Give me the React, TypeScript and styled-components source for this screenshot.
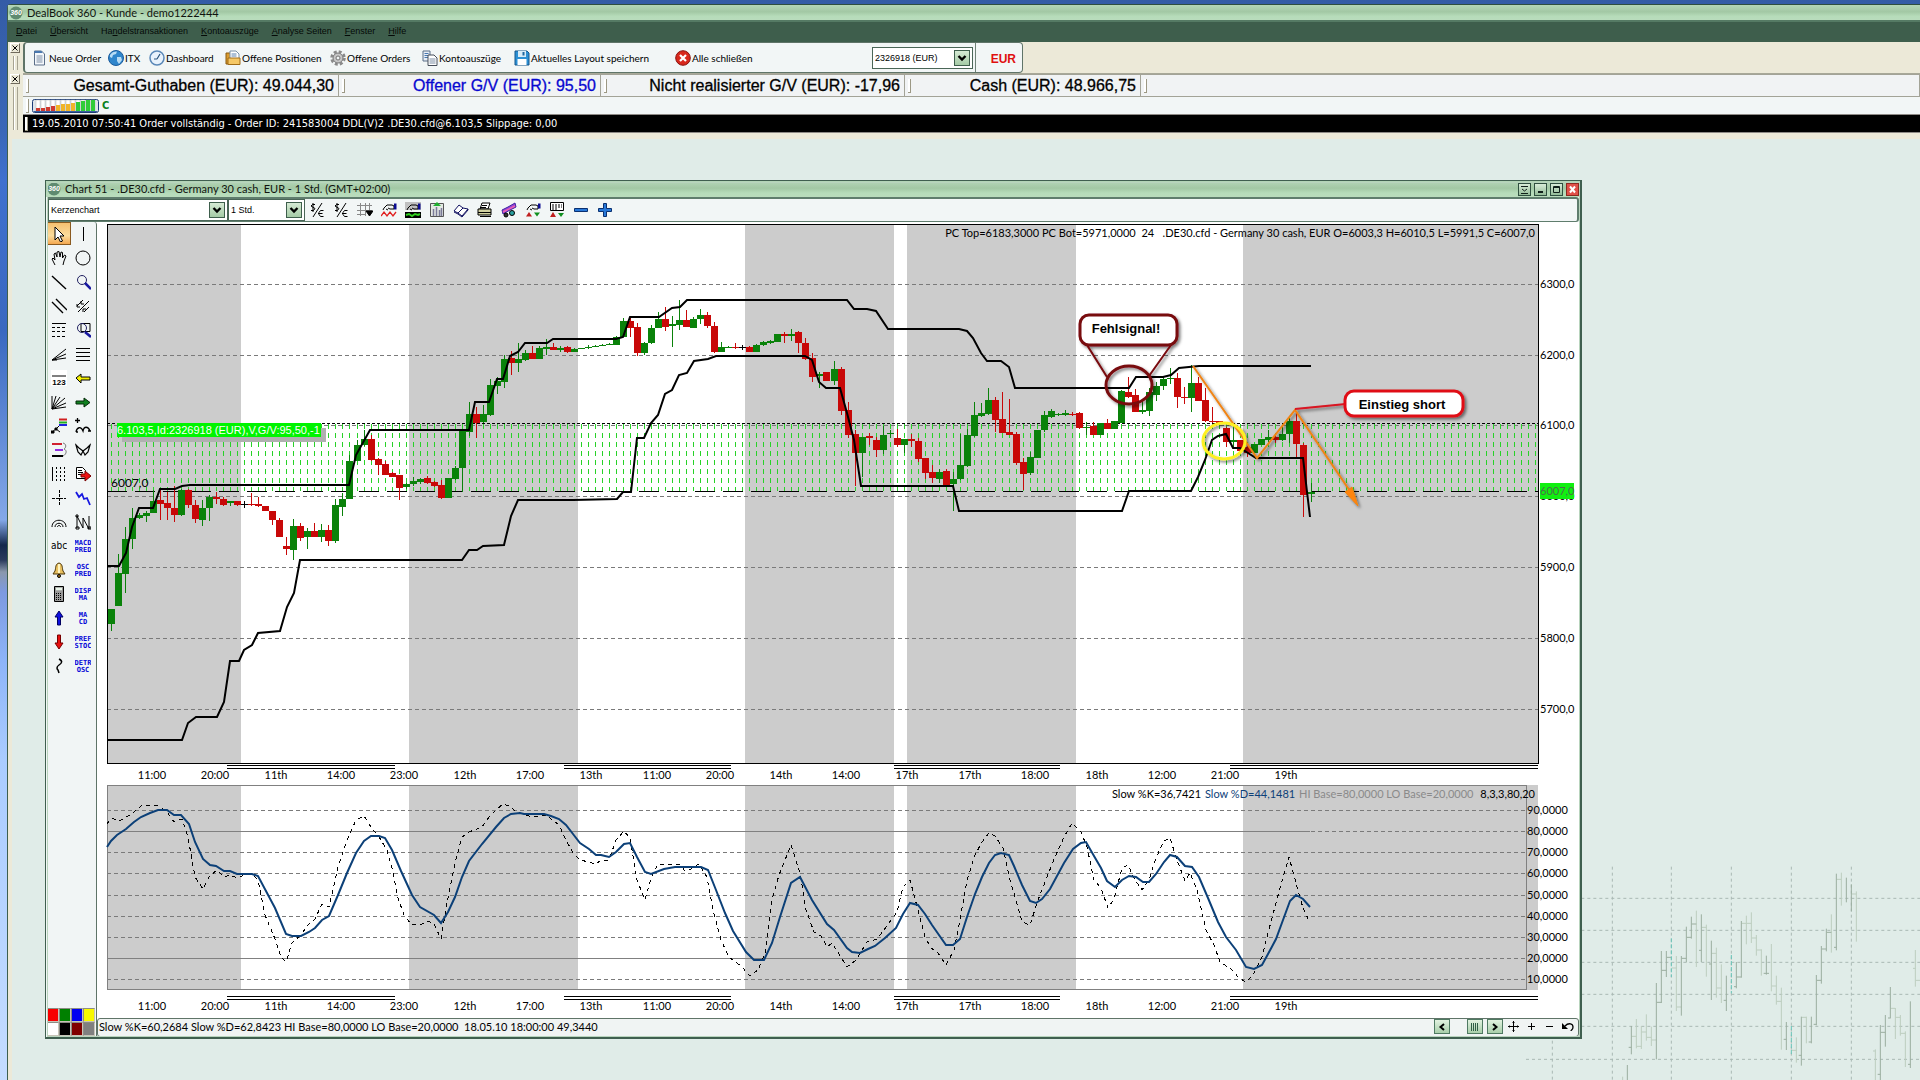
import React from "react";
import styled, { createGlobalStyle } from "styled-components";

const GlobalStyle = createGlobalStyle`
  * { box-sizing: border-box; }
  html, body { margin: 0; padding: 0; }
  body { font-family: "Liberation Sans", Arial, sans-serif; font-size: 10px; color: #000; overflow: hidden; }
  button, select { font: inherit; color: inherit; margin: 0; }
`;

const uiFont = `"DejaVu Sans Condensed", "DejaVu Sans", Tahoma, sans-serif`;
const chartFont = `Lato, "Century Gothic", sans-serif`;

/* ---------- frame ---------- */

const Desktop = styled.div`
  min-height: 100vh;
  display: flex;
  padding: 4px 0 0 7px;
  background: linear-gradient(180deg, #345ca6 0, #3a67b8 130px, #3f70cf 180px, #3a68c0 330px, #5580d0 400px, #84a8e8 520px, #14284c 545px, #2b3a5c 560px, #8a98ac 572px, #7d9ae0 592px, #8db4f8 660px, #aaccff 760px, #c4dcff 1080px);
`;

const AppWindow = styled.div`
  flex: 1;
  min-width: 0;
  display: flex;
  flex-direction: column;
  border-top: 1px solid #2f4f3f;
  border-left: 1px solid #3d5f4e;
  border-radius: 4px 0 0 0;
  background: #ece9d8;
`;

const TitleBar = styled.header<{ $h: number }>`
  height: ${(p) => p.$h}px;
  flex: none;
  display: flex;
  align-items: center;
  gap: 4px;
  padding-left: 1px;
  background: linear-gradient(180deg, #b4d6b8 0, #a2c8a4 45%, #b6dcba 75%, #b9dcbc 100%);
  color: #10140f;
`;

const Title = styled.h1`
  margin: 0;
  flex: 1;
  font: 400 11px/14px ${chartFont};
`;

const MenuBar = styled.nav`
  height: 22px;
  flex: none;
  display: flex;
  align-items: center;
  gap: 13px;
  padding: 0 0 2px 8px;
  border-top: 2px solid #557a64;
  background: #3e5e4c;
`;

const MenuItem = styled.button`
  border: 0;
  padding: 0;
  background: none;
  color: #050a07;
  font: 9px/12px "Liberation Sans", Arial, sans-serif;
  u { text-underline-offset: 1px; }
`;

/* ---------- docked bars ---------- */

const Dock = styled.div`
  display: flex;
  align-items: stretch;
`;

const Gutter = styled.div<{ $pad: number }>`
  width: 15px;
  flex: none;
  display: flex;
  flex-direction: column;
  align-items: center;
  gap: 3px;
  padding: ${(p) => p.$pad}px 2px 3px 1px;
`;

const CloseDock = styled.button`
  width: 10px;
  height: 10px;
  padding: 0;
  border: 1px solid;
  border-color: #fff #706a5c #706a5c #fff;
  background: #ece9d8;
  display: flex;
  align-items: center;
  justify-content: center;
`;

const GutterGrip = styled.div`
  flex: 1;
  width: 5px;
  border: solid #a7a392;
  border-width: 0 1px;
  box-shadow: inset 1px 0 #fff;
`;

const ToolBar = styled.div`
  height: 31px;
  display: flex;
  align-items: center;
  padding-left: 7px;
  border: 1px solid #5f7468;
  border-width: 1px 1px 1px 2px;
  border-radius: 4px;
  background: #f2f6f6;
`;

const ToolButton = styled.button<{ $w: number }>`
  width: ${(p) => p.$w}px;
  border: 0;
  padding: 0;
  background: none;
  display: flex;
  align-items: center;
  gap: 1px;
  white-space: nowrap;
  font: 10px/14px ${chartFont};
  svg { flex: none; }
`;

const SelectBox = styled.span<{ $w: number; $h: number }>`
  position: relative;
  display: inline-flex;
  flex: none;
  width: ${(p) => p.$w}px;
  height: ${(p) => p.$h}px;
  select {
    appearance: none;
    width: 100%;
    padding: 0 18px 0 2px;
    border: 1px solid #4a6657;
    border-radius: 0;
    background: #fff;
    font: 9px/14px "Liberation Sans", Arial, sans-serif;
  }
  svg {
    position: absolute;
    top: 3px;
    right: 3px;
    width: 16px;
    height: calc(100% - 6px);
    pointer-events: none;
    border: 1px solid #3e5e4c;
    background: linear-gradient(180deg, #d6ead4, #a5cba6);
  }
`;

const Currency = styled.div`
  align-self: stretch;
  width: 47px;
  margin-left: 2px;
  display: flex;
  align-items: center;
  justify-content: flex-end;
  border-left: 1px solid #6f8277;
  color: #e01010;
  font: 700 12px/14px "Liberation Sans", Arial, sans-serif;
  padding: 3px 6px 0 0;
`;

const InfoStack = styled.div`
  flex: 1;
  min-width: 0;
  display: flex;
  flex-direction: column;
  background: #f2f6f6;
  border-top: 1px solid #a8a898;
`;

const TotalsRow = styled.div`
  display: flex;
  height: 23px;
`;

const Total = styled.div<{ $w?: number; $blue?: boolean }>`
  ${(p) => (p.$w ? `width: ${p.$w}px; flex: none;` : "flex: 1;")}
  display: flex;
  align-items: center;
  justify-content: space-between;
  padding: 0 4px 0 3px;
  border: solid #a3a397;
  border-width: 1px 1px 1px 0;
  background: #f1f3f4;
  color: ${(p) => (p.$blue ? "#0808d0" : "#000")};
  font: 16px/18px "Liberation Sans", Arial, sans-serif;
  -webkit-text-stroke: 0.3px;
`;

const Grip = styled.i`
  width: 3px;
  height: 14px;
  flex: none;
  border: solid #9c9884;
  border-width: 0 1px 1px 0;
  background: #fff;
`;

const SignalRow = styled.div`
  height: 17px;
  display: flex;
  align-items: center;
  gap: 3px;
  padding-left: 3px;
  b { color: #0a8020; font: 700 11px/12px ${uiFont}; }
`;

const Ticker = styled.div`
  height: 19px;
  display: flex;
  align-items: center;
  gap: 4px;
  padding-left: 2px;
  border: solid #8e8a86;
  border-width: 1px 0;
  background: #000;
  color: #fff;
  font: 11px/14px ${uiFont};
`;

/* ---------- workspace ---------- */

const Workspace = styled.main`
  position: relative;
  flex: 1;
  margin: 6px 0 0 4px;
  background: #e0ece8;
`;

const Backdrop = styled.svg`
  position: absolute;
  right: 0;
  bottom: 0;
  width: 440px;
  height: 240px;
`;

const ChartWindow = styled.section`
  position: absolute;
  left: 33px;
  top: 41px;
  width: 1537px;
  display: flex;
  flex-direction: column;
  border: 2px solid #3f5f4f;
  border-width: 1px 2px 2px 1px;
  outline: 1px solid #b8d4bd;
  outline-offset: -3px;
  background: #f2f6f6;
`;

const WindowButtons = styled.div`
  display: flex;
  gap: 3px;
  padding-right: 1px;
`;

const WindowButton = styled.button<{ $red?: boolean }>`
  width: 13px;
  height: 13px;
  padding: 0;
  border: 1px solid ${(p) => (p.$red ? "#8c2a20" : "#2f4f3f")};
  background: ${(p) => (p.$red ? "#e05048" : "linear-gradient(180deg, #d8ecd8, #94bc98)")};
  color: ${(p) => (p.$red ? "#fff" : "#10201a")};
  display: flex;
`;

const ChartTools = styled.div`
  display: flex;
  align-items: center;
  height: 25px;
  margin: 0 1px;
  border: 2px solid #5f7d6d;
  border-width: 2px 2px 1px 1px;
  border-radius: 0 3px 3px 0;
`;

const IconButton = styled.button<{ $active?: boolean }>`
  width: 24px;
  height: ${(p) => (p.$active ? 23 : 24)}px;
  padding: 0;
  border: 1px solid ${(p) => (p.$active ? "#8a5a20" : "transparent")};
  background: ${(p) => (p.$active ? "linear-gradient(180deg, #f6c070, #fbdc9c 60%, #f4a850)" : "none")};
  display: flex;
  align-items: center;
  justify-content: center;
`;

const ChartBody = styled.div`
  display: flex;
  margin: 0 1px 0 1px;
`;

const Palette = styled.aside`
  width: 50px;
  flex: none;
  display: flex;
  flex-direction: column;
  justify-content: space-between;
  border-right: 1px solid #5f7468;
  border-radius: 0 3px 0 0;
  background: #f1f5f5;
`;

const PaletteGrid = styled.div`
  display: grid;
  grid-template-columns: 24px 24px;
  grid-auto-rows: 24px;
`;

const Swatches = styled.div`
  display: grid;
  grid-template-columns: repeat(4, 12px);
  grid-auto-rows: 14px;
  padding-bottom: 1px;
`;

const Swatch = styled.button<{ $c: string }>`
  padding: 0;
  border: 1px solid;
  border-color: #8c8c84 #c8c4b8 #c8c4b8 #8c8c84;
  background: ${(p) => p.$c};
`;

const PlotColumn = styled.div`
  flex: 1;
  min-width: 0;
  display: flex;
  flex-direction: column;
  background: #fff;
`;

const Plot = styled.svg`
  display: block;
  width: 100%;
  height: auto;
`;

const StatusBar = styled.footer`
  height: 19px;
  display: flex;
  align-items: center;
  justify-content: space-between;
  padding: 0 3px 2px 1px;
  border: 1px solid #5f7468;
  border-radius: 3px;
  background: #f0f4f3;
  font: 11px/14px ${chartFont};
`;

const StatusText = styled.span`
  white-space: pre;
`;

const Scroller = styled.div`
  display: flex;
  align-items: center;
  gap: 2px;
`;

const ScrollButton = styled.button<{ $flat?: boolean; $gap?: number }>`
  width: 16px;
  height: 15px;
  margin-left: ${(p) => p.$gap ?? 0}px;
  padding: 0;
  border: ${(p) => (p.$flat ? "0" : "1px solid #4f7a62")};
  background: ${(p) => (p.$flat ? "none" : "linear-gradient(180deg, #e2f2e0, #a8cfaa)")};
  display: flex;
  align-items: center;
  justify-content: center;
`;

/* ---------- icons ---------- */

const Badge = () => (
  <svg width="14" height="14" viewBox="0 0 14 14" aria-hidden="true">
    <circle cx="7" cy="7" r="6.5" fill="#5f8a70" />
    <text x="7" y="9" fontSize="7" fontWeight="700" fontStyle="italic" textAnchor="middle" fill="#fff" fontFamily="Liberation Sans, sans-serif">360</text>
  </svg>
);

const CloseX = () => (
  <svg width="6" height="6" viewBox="0 0 6 6"><path d="M.5.5l5 5M5.5.5l-5 5" stroke="#000" /></svg>
);

const Arrow = () => (
  <svg viewBox="0 0 14 14" preserveAspectRatio="xMidYMid meet"><path d="M3.5 5l3.5 3.5L10.500 5" fill="none" stroke="#000" strokeWidth="2.400" /></svg>
);

const Sheet = ({ x = 0 }: { x?: number }) => (
  <g transform={`translate(${x} 0)`}>
    <path d="M1.500 1h7l3 3v11h-10z" fill="#f4f8fc" stroke="#5a6e88" />
    <path d="M1.500 1h7l1 2h-8z" fill="#4878b0" />
    <path d="M3.500 6h6M3.500 8h6M3.500 10h6M3.500 12h6" stroke="#7c8ea4" />
  </g>
);

const mainIcons: Record<string, React.ReactNode> = {
  order: <Sheet x={1} />,
  globe: (
    <>
      <circle cx="8" cy="8" r="7.500" fill="#2f86cc" />
      <path d="M2 5c2-3 5-4 7-3.500L8 4 5 5 4 8 2 7zM9 7l4 0 1 3-3 4-2-3z" fill="#b9dcf4" />
      <circle cx="8" cy="8" r="7.500" fill="none" stroke="#1b5c9c" />
    </>
  ),
  clock: (
    <>
      <circle cx="8" cy="8" r="7" fill="#e8f2fc" stroke="#5a88b8" strokeWidth="1.500" />
      <path d="M8 9l3-5M8 9H5" stroke="#28527c" fill="none" strokeWidth="1.200" />
    </>
  ),
  folder: (
    <>
      <path d="M1 3h5l1 2h5v9H1z" fill="#d99a2c" stroke="#8a5a10" />
      <path d="M5 1h6l3 3v7H5z" fill="#fff" stroke="#7890a8" />
      <path d="M6.500 4h5M6.500 6h5" stroke="#5a82b0" />
      <path d="M3 8h12v6.500H3z" fill="#f6c866" stroke="#a06c18" />
    </>
  ),
  gear: (
    <>
      <circle cx="8" cy="8" r="6.500" fill="none" stroke="#8a8a8a" strokeWidth="2.500" strokeDasharray="3 2.100" />
      <circle cx="8" cy="8" r="5" fill="#c6c6c6" stroke="#747474" />
      <circle cx="8" cy="8" r="2" fill="#f2f6f6" stroke="#747474" />
    </>
  ),
  docs: (
    <>
      <path d="M1 1h7v10H1z" fill="#e8eef6" stroke="#5a6e88" />
      <path d="M2.500 3.500h4M2.500 5.500h4M2.500 7.500h4" stroke="#4878b0" />
      <path d="M6 5h6l3 3v7.500H6z" fill="#fff" stroke="#444c58" />
      <path d="M7.500 9h6M7.500 11h6M7.500 13h6" stroke="#7c8ea4" />
    </>
  ),
  save: (
    <>
      <path d="M1 1h12l2 2v12H1z" fill="#2c90d4" stroke="#15568c" />
      <path d="M4 1h8v6H4z" fill="#d8ecf8" />
      <path d="M8.500 2h2v3.500h-2z" fill="#2068a0" />
      <path d="M3.500 9h9v6h-9z" fill="#fff" />
    </>
  ),
  close: (
    <>
      <circle cx="8" cy="8" r="7.300" fill="#d8281c" stroke="#8a1410" />
      <path d="M5 5l6 6M11 5l-6 6" stroke="#fff" strokeWidth="2.200" />
    </>
  ),
};

const MainIcon = ({ name }: { name: string }) => (
  <svg width="16" height="16" viewBox="0 0 16 16" aria-hidden="true">{mainIcons[name]}</svg>
);

const hand = "M3 6l3-3h5l2 1v3H9L7 6M5 7l2 1M3 6l-1 2";

const chartIcons: React.ReactNode[] = [
  <path d="M6 2.500H3.500L2 4l4 2.500L4.500 8.500H2M4 1v9M13 1L4 15M14.500 8.500h-3l-1.500 2v2l1.500 2h3M9 11.500h4.500" />,
  <path d="M6 2.500H3.500L2 4l4 2.500L4.500 8.500H2M4 1v9M13 1L4 15M14.500 8.500h-3l-1.500 2v2l1.500 2h3M9 11.500h4.500" />,
  <><path d="M3.500 1v13M8.500 1v13M12.500 1v9M0 3.500h15M0 8.500h15M0 12.500h9" stroke="#888" /><path d="M9 9h7l-3.500 5z" fill="#000" /></>,
  <><path d={hand} /><path d="M13 1.500h2.500v6H13z" fill="#0a0a90" stroke="none" /><path d="M0 14l3-4 3 4 3-4 3 4 3-4" stroke="#e02020" strokeWidth="1.300" /></>,
  <><path d="M0 0h16v8H0z" fill="#c0c0c0" stroke="none" /><path d={hand} /><path d="M13 1.500h2.500v6H13z" fill="#0a0a90" stroke="none" /><path d="M0 10h16v6H0z" fill="#000" stroke="none" /><path d="M1 13l3-1 3 2 3-2 3 1 2-1" stroke="#30d020" strokeWidth="2" /></>,
  <><path d="M1.500 1.500h13v13h-13z" fill="#e4e8e4" stroke="#555" /><path d="M8 0l4 4H4z" fill="#20b030" stroke="none" /><path d="M4.500 7v7M7.500 5v9M10.500 8v6M12.500 6v8" stroke="#7a7a98" strokeWidth="1.500" /></>,
  <path d="M1 9l5-6 4 3 5 1-6 7-4-3-4-2zM10 6L5 11M15 7v1l-6 7-4-3-4-2" fill="#fff" stroke="#101060" />,
  <><path d="M5 1h8l-2 6H3z" fill="#fff" /><path d="M1 7h13v6H1z" fill="#d0d0a0" /><path d="M5 3.500h5M4 5.500h5M1 10.500h13M3 14.500h11" /></>,
  <><path d="M1 8l6-3 7-4 1 4-6 3-7 4z" fill="#9048d8" stroke="#4020a0" /><path d="M2 10l12-6" stroke="#f060b0" strokeWidth="1.500" /><circle cx="5" cy="13" r="2" fill="#333" /><circle cx="11" cy="11" r="2.500" fill="#28a0a0" /></>,
  <><path d={hand} /><path d="M13 1.500h2.500v5H13z" fill="#0a0a90" stroke="none" /><path d="M1 14.500h6L4 10z" fill="#c02020" stroke="none" /><path d="M9 10.500h6l-3 4z" fill="#109020" stroke="none" /></>,
  <><path d="M1.500.500h13v8h-13z" fill="#fff" /><path d="M3 3h10M3 5h10M3 7h6" strokeDasharray="2 1" /><path d="M1 15h6l-3-5z" fill="#c02020" stroke="none" /><path d="M9 11h6l-3 4z" fill="#109020" stroke="none" /></>,
  <path d="M1.500 6.500h13v3h-13z" fill="#2878d8" stroke="#0a3070" />,
  <path d="M6.500 1.500h3v5h5v3h-5v5h-3v-5h-5v-3h5z" fill="#2878d8" stroke="#0a3070" />,
];

const Label = ({ a, b }: { a: string; b: string }) => (
  <g fill="#0808d8" stroke="none" fontFamily="DejaVu Sans Mono, monospace" fontSize="7" fontWeight="700" textAnchor="middle">
    <text x="8" y="7">{a}</text>
    <text x="8" y="14">{b}</text>
  </g>
);

const paletteIcons: React.ReactNode[] = [
  <path d="M4 1v13l3-3 2.500 5 2-1-2.500-5h4z" fill="#fff" />,
  <path d="M8.500 1v14" />,
  <path d="M4 15L1 9l1-1 2 2-1-6 1.500-1L6 7V2l2-.500L9 7l1-5 1.500.500V8l2-3 1.500 1-2 5-1 4" />,
  <circle cx="8" cy="8" r="7" />,
  <path d="M1 2l14 13" strokeWidth="1.400" />,
  <><circle cx="7" cy="6" r="4.500" stroke="#202060" /><path d="M10 9l6 6" stroke="#1818a0" strokeWidth="2.500" /></>,
  <path d="M1 4l11 11M5 1l11 11" strokeWidth="1.400" />,
  <path d="M2 8L8 2M3 14L14 3M9 14l5-5M2 6v3h3M8 14v-3h3M6 3v3h3" />,
  <><path d="M1 1.500h14" /><path d="M1 5.500h14M1 9.500h14M1 14.500h14" strokeDasharray="3 2" /></>,
  <><path d="M6 1.500h9v8H6z" /><circle cx="7" cy="6" r="4.500" stroke="#202060" /><path d="M10 10l6 5" stroke="#1818a0" strokeWidth="2.500" /></>,
  <path d="M1 14L15 3M1 14l14-6M1 14l14-2M1 14h5" />,
  <path d="M1 2.500h14M1 6.500h14M1 10.500h14M1 14.500h14" />,
  <><path d="M0 0h16v16H0z" fill="#fff" stroke="none" /><path d="M1 6h14" /><text x="8" y="15" fontSize="8" fontWeight="700" textAnchor="middle" fill="#000" stroke="none" fontFamily="Liberation Sans, sans-serif">123</text></>,
  <path d="M1 8l5-4v3h9v3H6v3z" fill="#f4f000" />,
  <path d="M1 15V2M1 15L5 2M1 15l8-12M1 15L14 4M1 15l14-6M1 15l14-2" />,
  <path d="M1 7h8V4l6 4.500L9 13v-3H1z" fill="#108020" stroke="#052a08" />,
  <><path d="M8 1.500h8" stroke="#d02020" strokeWidth="2" /><path d="M8 4.500h8" stroke="#20b020" strokeWidth="2" /><path d="M8 7h8" stroke="#2020e0" strokeWidth="2" /><path d="M1 14l4-3 4 3M5 11l3-3" /><path d="M0 13h3v2H0zM4 10h2v2H4z" fill="#000" /></>,
  <path d="M1 14c1-5 5-6 7-1 1-5 5-5 7 0M2.500 0v5M0 2.500h5M1 14h2M13 13h3" strokeWidth="1.300" />,
  <><path d="M1 2h10" stroke="#d02030" strokeWidth="2" /><path d="M4 8h8" stroke="#9030e0" strokeWidth="2" /><path d="M1 14h11" strokeWidth="2" /><path d="M12 1c4 1 3 5 1 6 3 1 3 5-1 7" stroke="#777" /></>,
  <path d="M1 3l2 7 3 3 2-4 2 4 3-3 2-7-3 3-4 3-4-3z" strokeWidth="1.200" />,
  <><path d="M1.500 1v14" /><path d="M5.500 1v14M9.500 1v14M13.500 1v14" strokeDasharray="2 2" /></>,
  <><path d="M1.500 1.500h6l3 3v8h-9zM3 4.500h4M3 6.500h5M3 8.500h5" fill="#fff" /><path d="M6 8h4V5l6 5-6 5v-4H6z" fill="#f01010" stroke="#700" /></>,
  <path d="M8.500 0v16M1 8.500h14" strokeDasharray="3 1" />,
  <path d="M1 2l3 5 3-3 2 5 3-1 3 7" stroke="#1818e0" strokeWidth="1.800" />,
  <path d="M1 13c0-9 14-9 14 0M4 13c0-5 8-5 8 0M6.500 13c0-2 3-2 3 0" />,
  <path d="M2 14V2l6 12V4l6 11V2M1 13h3v2H1zM13 13h3v2h-3zM1 1h2v2H1z" />,
  <text x="8" y="11" fontSize="10" textAnchor="middle" fill="#000" stroke="none" fontFamily="DejaVu Sans Condensed, sans-serif">abc</text>,
  <Label a="MACD" b="PRED" />,
  <><path d="M8 1c-4 1-3 5-4 8l-2 3h12l-2-3c-1-3 0-7-4-8z" fill="#e8c060" stroke="#4a3408" /><path d="M8 2v9" stroke="#fff4c0" strokeWidth="2" /><circle cx="8" cy="14" r="1.500" fill="#a07010" /></>,
  <Label a="OSC" b="PRED" />,
  <><path d="M3.500.500h9v15h-9z" fill="#999" /><path d="M5 3h6" stroke="#e8f4e8" strokeWidth="2.500" /><path d="M5 7.500h6M5 9.500h6M5 11.500h6M5 13.500h6" strokeDasharray="1 1" /></>,
  <Label a="DISP" b="MA" />,
  <path d="M8 1l4 6H9.500v8h-3V7H4z" fill="#1010e0" stroke="#000060" />,
  <Label a="MA" b="CD" />,
  <path d="M8 15L4 9h2.500V1h3v8H12z" fill="#e81010" stroke="#700" />,
  <Label a="PREF" b="STOC" />,
  <path d="M8 1c4 2 3 4 0 6s-2 4-1 5l1 3" strokeWidth="1.500" />,
  <Label a="DETR" b="OSC" />,
];

const Glyph = ({ children }: { children: React.ReactNode }) => (
  <svg width="16" height="16" viewBox="0 0 16 16" fill="none" stroke="#000" aria-hidden="true">{children}</svg>
);

/* ---------- chart data ---------- */

type Candle = [kind: "G" | "R" | "K", top: number, bottom: number, high: number, low: number];

const candles: Candle[] = [
  ["G",609,624,609,631],["G",573,606,554,606],["G",539,574,527,593],["G",518,539,508,549],["G",515,518,513,519],
  ["G",513,516,511,522],["G",501,513,490,513],["R",500,504,490,520],["R",503,508,492,520],["R",508,515,486,522],
  ["G",490,515,489,516],["R",490,505,489,508],["R",505,519,500,523],["G",508,520,500,526],["G",497,508,495,521],
  ["R",497,499,492,504],["R",499,505,497,506],["G",501,503,501,506],["R",501,505,501,506],["K",504,505,501,508],
  ["R",504,505,493,506],["R",504,506,497,507],["R",506,511,506,511],["R",511,520,511,525],["R",520,537,518,537],
  ["R",546,549,537,555],["G",526,550,519,560],["R",526,538,523,541],["G",531,537,528,549],["R",531,537,523,537],
  ["G",530,537,524,542],["R",530,541,525,546],["G",505,541,499,543],["G",499,507,493,516],["G",461,499,455,499],
  ["G",445,461,440,461],["G",439,445,430,446],["R",439,460,435,461],["R",459,465,458,475],["R",464,475,461,475],
  ["R",473,477,472,477],["R",475,488,475,500],["G",484,487,483,489],["G",481,484,477,486],["G",479,482,478,484],
  ["R",478,483,476,484],["R",482,486,481,487],["R",485,498,480,499],["G",478,498,478,498],["G",468,479,466,480],
  ["G",431,468,431,492],["G",414,432,402,436],["R",414,423,407,438],["G",414,422,405,423],["G",385,415,379,416],
  ["G",381,386,377,394],["G",359,382,355,388],["R",358,363,351,375],["G",359,363,343,372],["G",353,360,350,361],
  ["R",353,359,346,359],["G",348,359,346,359],["G",347,349,339,355],["R",347,350,343,350],["G",348,350,346,352],
  ["R",347,352,346,353],["G",349,352,348,352],["G",348,349,348,349],["G",347,348,345,349],["G",346,347,345,347],
  ["G",345,346,344,346],["G",344,345,343,345],["G",337,345,336,345],["G",321,337,318,337],["R",321,328,317,337],
  ["R",327,353,323,356],["G",343,353,342,355],["G",328,343,325,344],["G",319,328,312,328],["R",319,327,307,331],
  ["G",324,326,316,347],["G",320,325,300,330],["R",320,327,310,327],["G",319,328,317,328],["G",315,319,309,324],
  ["R",315,326,312,328],["R",326,352,322,353],["G",347,352,342,352],["G",347,348,346,348],["R",347,348,343,349],
  ["K",347,348,345,350],["R",347,352,346,352],["G",345,352,344,352],["G",342,345,341,346],["G",341,343,340,344],
  ["G",334,342,334,342],["R",334,336,332,343],["G",334,336,329,341],["R",332,343,331,353],["R",343,359,338,360],
  ["R",358,377,353,382],["G",374,376,372,388],["R",372,381,372,381],["G",369,381,361,385],["R",369,411,367,415],
  ["R",410,435,402,438],["R",434,453,430,486],["G",437,453,437,477],["R",436,438,433,445],["R",440,450,437,457],
  ["G",435,450,426,454],["G",433,434,430,438],["R",438,445,429,447],["G",439,445,439,453],["R",439,441,434,447],
  ["R",441,459,438,462],["R",458,473,458,479],["R",472,478,465,483],["G",472,479,469,483],["R",471,485,469,485],
  ["G",479,484,472,511],["G",465,479,434,480],["G",435,466,429,467],["G",415,436,402,437],["G",413,416,403,417],
  ["G",400,414,388,415],["R",400,420,397,432],["R",419,433,392,433],["R",432,435,399,435],["R",434,463,432,465],
  ["R",462,474,458,490],["G",457,473,452,475],["G",430,458,430,458],["G",415,430,411,432],["G",411,417,409,418],
  ["G",414,415,413,416],["G",413,415,410,416],["R",414,415,412,416],["R",413,428,412,429],["G",427,428,422,435],
  ["R",426,435,422,435],["G",423,435,423,435],["R",423,429,419,429],["G",421,429,421,429],["G",391,423,390,423],
  ["R",392,397,377,398],["R",395,412,389,412],["G",410,412,400,414],["G",392,411,388,416],["G",386,395,382,401],
  ["G",379,386,377,390],["G",378,379,368,384],["R",378,397,373,408],["R",397,398,387,404],["G",383,398,365,412],
  ["R",383,401,377,401],["R",400,421,388,422],["R",421,422,407,423],["R",421,424,421,424],["R",428,442,427,447],
  ["G",440,442,428,448],["R",440,451,440,451],["R",447,453,446,457],["G",444,453,444,453],["G",439,445,439,445],
  ["G",437,440,430,442],["R",437,440,435,443],["G",434,440,427,441],["G",421,434,417,443],["R",421,444,413,458],
  ["R",445,495,443,517],["G",492,494,483,502],
];

const STEP = 7.0147;
const candleX = (n: number) => Math.round(111 + n * STEP);
const candleColor = { G: "#0a820a", R: "#c80808", K: "#000" };

const upperChannel =
  "107,566 119,566 126,553 132,527 139,508 153,508 160,489 175,489 182,486 190,485 349,485 356,455 370,430 469,430 475,402 489,402 497,379 503,379 510,356 518,352 525,343 547,343 553,339 616,339 623,337 630,317 659,317 672,308 680,307 687,300 847,300 854,309 867,309 876,311 888,329 959,329 967,331 973,338 981,353 987,361 1001,361 1009,367 1015,388 1129,388 1136,377 1163,377 1171,375 1179,368 1199,366 1311,366";
const lowerChannel =
  "107,740 182,740 188,723 196,717 217,717 224,702 230,661 239,661 244,650 252,645 258,633 280,631 287,607 294,593 300,560 462,560 469,550 477,550 483,546 504,545 511,516 518,500 573,500 617,499 623,492 631,492 637,438 644,438 651,423 658,415 665,394 672,390 679,375 687,373 694,361 708,359 716,356 805,356 812,360 819,382 826,388 840,388 847,413 854,440 861,486 953,486 959,511 1122,511 1129,491 1191,491 1198,477 1205,460 1212,440 1218,436 1226,434 1233,448 1240,448 1256,458 1303,458 1310,517";
const slowD =
  "107,847 111,841 117,835 126,829 134,822 141,817 150,813 158,810 167,810 174,815 181,815 189,824 195,842 203,859 210,865 216,866 224,871 230,871 237,874 252,874 258,876 275,908 286,934 292,936 301,936 309,932 315,928 322,920 329,916 338,895 347,873 356,853 364,841 371,836 379,836 385,838 392,850 401,871 412,895 420,907 434,915 441,923 448,912 455,897 462,877 469,861 482,844 496,827 504,818 511,814 520,813 524,814 544,814 551,816 559,819 566,825 573,834 580,843 589,849 596,855 601,855 609,857 616,852 624,844 630,843 637,857 645,872 651,874 664,869 675,867 696,867 701,867 708,870 716,890 725,913 733,931 746,952 754,960 764,960 772,943 780,917 791,883 800,877 812,900 827,924 834,930 847,948 852,952 860,953 868,949 875,946 885,938 896,928 903,914 910,903 918,905 925,914 932,925 946,945 953,945 960,939 967,917 975,894 982,877 989,863 995,855 1001,853 1009,855 1014,866 1022,885 1030,901 1036,903 1042,899 1050,889 1064,863 1073,849 1081,843 1086,842 1094,856 1101,868 1107,881 1115,887 1122,880 1129,876 1136,877 1143,882 1149,882 1156,874 1164,862 1170,855 1177,857 1185,866 1192,867 1199,877 1208,898 1218,922 1226,937 1236,950 1246,967 1254,969 1262,965 1268,954 1276,939 1283,920 1290,901 1296,895 1303,899 1310,907";
const slowK =
  "107,824 111,818 119,821 125,818 134,812 141,806 147,805 158,806 167,812 174,822 182,819 188,837 195,877 203,889 209,877 217,870 224,877 230,875 237,878 244,875 252,874 258,880 265,915 275,939 281,957 286,962 292,943 301,935 307,926 315,919 322,904 329,907 338,867 347,840 356,820 364,816 371,827 379,837 387,850 392,868 398,898 404,915 411,924 420,925 428,921 434,924 441,939 447,903 455,863 462,837 469,832 482,827 489,817 496,810 503,804 509,806 517,812 526,815 532,817 546,815 559,825 566,840 573,853 580,860 589,862 595,864 602,860 609,860 616,840 624,831 630,838 637,880 645,900 651,878 658,864 675,864 680,865 686,872 699,864 707,877 713,910 721,940 729,957 742,967 750,976 758,970 765,953 772,900 779,875 791,845 800,873 806,910 814,932 821,936 827,947 832,943 847,967 856,960 867,942 877,939 884,930 897,912 903,887 910,880 918,910 925,937 931,948 938,953 946,965 954,950 960,920 967,880 975,855 982,842 989,833 995,836 1003,848 1010,880 1016,900 1022,922 1030,925 1038,900 1047,877 1055,857 1064,837 1072,823 1081,832 1087,847 1094,880 1101,888 1108,908 1114,899 1122,868 1128,865 1135,880 1142,890 1149,880 1156,858 1164,841 1170,838 1177,860 1185,881 1190,873 1197,890 1206,930 1214,945 1220,962 1231,969 1239,978 1246,982 1253,975 1262,957 1268,933 1276,903 1283,877 1289,857 1296,883 1303,908 1310,923";

const sessions = [[107, 241], [409, 578], [745, 894], [907, 1076], [1243, 1538]];
const ruleSpans = [[227, 395], [564, 731], [894, 1060], [1230, 1538]];
const prices: [string, number][] = [["6300,0", 284], ["6200,0", 355], ["6100,0", 425], ["6000,0", 496], ["5900,0", 567], ["5800,0", 638], ["5700,0", 709]];
const levels: [string, number][] = [["90,0000", 810], ["80,0000", 831], ["70,0000", 852], ["60,0000", 873], ["50,0000", 895], ["40,0000", 916], ["30,0000", 937], ["20,0000", 958], ["10,0000", 979]];
const times: [string, number][] = [
  ["11:00", 152], ["20:00", 215], ["11th", 276], ["14:00", 341], ["23:00", 404], ["12th", 465], ["17:00", 530], ["13th", 591], ["11:00", 657],
  ["20:00", 720], ["14th", 781], ["14:00", 846], ["17th", 907], ["17th", 970], ["18:00", 1035], ["18th", 1097], ["12:00", 1162], ["21:00", 1225], ["19th", 1286],
];

const TimeAxis = ({ y }: { y: number }) => (
  <g>
    {ruleSpans.map(([a, b]) => (
      <path key={a} d={`M${a} ${y + 0.5}H${b}M${a} ${y + 3.5}H${b}`} stroke="#000" shapeRendering="crispEdges" />
    ))}
    {times.map(([t, x]) => (
      <text key={x} x={x} y={y + 14} textAnchor="middle">{t}</text>
    ))}
  </g>
);

const PriceChart = () => (
  <g>
    <g shapeRendering="crispEdges" fill="none">
      {sessions.map(([a, b]) => <rect key={a} x={a} y="224" width={b - a} height="539" fill="#ccc" />)}
      {prices.map(([t, y]) => <path key={t} d={`M107 ${y + 0.5}H1538`} stroke="#7a7a7a" strokeDasharray="4 3" />)}
      {Array.from({ length: 204 }, (_, n) => (
        <path key={n} d={`M${candleX(n) + 0.5} 424V491`} stroke="#28d228" strokeDasharray="5 4" />
      ))}
      <path d="M107 423.500H1538" stroke="#000" strokeDasharray="3 2" />
      <path d="M107 491.500H1538" stroke="#000" strokeDasharray="20 8" />
      {candles.map(([k, top, bottom, high, low], n) => (
        <g key={n} fill={candleColor[k]}>
          <rect x={candleX(n)} y={high} width="1" height={Math.max(1, low - high)} />
          <rect x={candleX(n) - 3} y={top} width="7" height={Math.max(1, bottom - top)} />
        </g>
      ))}
    </g>
    <polyline points={upperChannel} fill="none" stroke="#000" strokeWidth="2" />
    <polyline points={lowerChannel} fill="none" stroke="#000" strokeWidth="2" />
    <path d="M107.500 763V224.500H1538.500V763.500H107" fill="none" stroke="#000" shapeRendering="crispEdges" />
    <text x="1535" y="237" textAnchor="end" xmlSpace="preserve">{"PC Top=6183,3000 PC Bot=5971,0000  24   .DE30.cfd - Germany 30 cash, EUR O=6003,3 H=6010,5 L=5991,5 C=6007,0"}</text>
    <text x="111" y="487" fontSize="12">6007,0</text>
    {prices.map(([t, y]) => <text key={t} x="1540" y={y + 4}>{t}</text>)}
    <rect x="1540" y="483" width="34" height="16" fill="#10f010" />
    <text x="1540" y="495" fill="#4a704a">6007,0</text>
    <rect x="122" y="428" width="204" height="14" fill="#b0b0b0" />
    <rect x="117" y="423" width="204" height="14" fill="#00f400" />
    <text x="117" y="434" fill="#fff" fontSize="11" fontFamily="Liberation Sans, Arial, sans-serif">6.103,5,Id:2326918 (EUR),V,G/V:95,50,-1</text>
  </g>
);

const Annotations = () => (
  <g fill="none" filter="url(#drop)">
    <path d="M1193 366L1257 458L1295 410L1352 494" stroke="#f08414" strokeWidth="2" />
    <path d="M1345 492l7-5 6 19z" fill="#ff8410" stroke="#f08414" />
    <ellipse cx="1224" cy="441" rx="21" ry="18" stroke="#fff020" strokeWidth="3" />
    <path d="M1295 409L1346 404" stroke="#d81420" strokeWidth="2" />
    <path d="M1087 345L1107 377M1171 345L1149 376" stroke="#780810" strokeWidth="2" />
    <ellipse cx="1129" cy="385" rx="23" ry="19" stroke="#780810" strokeWidth="3" />
    <rect x="1080" y="315" width="97" height="30" rx="9" fill="#fff" stroke="#780810" strokeWidth="3" />
    <rect x="1345" y="391" width="118" height="25" rx="9" fill="#fff" stroke="#e01018" strokeWidth="3" />
  </g>
);

const Oscillator = () => (
  <g>
    <g shapeRendering="crispEdges" fill="none">
      {sessions.map(([a, b]) => <rect key={a} x={a} y="785" width={b - a} height="205" fill="#ccc" />)}
      {levels.map(([t, y]) => <path key={t} d={`M107 ${y + 0.5}H1526`} stroke="#7a7a7a" strokeDasharray="4 3" />)}
      <path d="M107 831.500H1310M107 958.500H1310M107 785.500H1526.500V989.500H107.500V785" stroke="#808080" />
    </g>
    <polyline points={slowK} fill="none" stroke="#000" strokeDasharray="4 4" shapeRendering="crispEdges" />
    <polyline points={slowD} fill="none" stroke="#0c4078" strokeWidth="2" />
    <text x="1112" y="798">Slow %K=36,7421</text>
    <text x="1205" y="798" fill="#0c4078">Slow %D=44,1481</text>
    <text x="1299" y="798" fill="#8a8a8a">HI Base=80,0000 LO Base=20,0000</text>
    <text x="1535" y="798" textAnchor="end">8,3,3,80,20</text>
    {levels.map(([t, y]) => <text key={t} x="1527" y={y + 4}>{t}</text>)}
  </g>
);

/* ---------- desktop backdrop ---------- */

const darkBars = "M442 675V720M454 558V643M529 429V658M544 333V489M559 333V411M604 348V527M619 260V367M634 230V296M664 223V366M694 302V480M739 407V513M769 366V445M784 243V413M859 347V404M919 546V630M964 530V677M994 530V610M1009 405V556M1024 318V431M1039 266V334M1069 101V331M1099 113V187M1114 133V214M1201 555V720M1216 525V620M1231 441V535M1291 484V684M446 622h8M530 487h14M545 391h14M560 352h14M605 355h14M620 292h14M635 252h14M657 331h7M687 372h7M731 481h8M762 440h7M770 411h14M851 400h16M911 598h8M956 646h8M986 606h8M1001 553h8M1010 421h14M1025 327h14M1040 277h14M1062 322h7M1193 703h8M1202 577h14M1224 534h7M1284 673h7";
const lightBars = "M428 710V720M469 537V625M484 558V627M499 523V602M514 560V618M589 348V513M649 212V381M679 254V410M709 323V473M724 373V489M799 227V313M814 217V309M829 285V347M844 328V407M874 312V454M889 407V494M904 443V629M949 592V668M979 530V610M1054 223V338M1084 98V197M1129 154V305M1186 628V720M1246 504V597M1261 525V587M1276 574V681M1306 330V440M455 589h14M470 619h14M485 576h14M500 592h14M515 600h14M575 384h14M590 501h14M665 262h14M695 340h14M710 444h14M785 250h14M800 250h14M815 294h14M830 330h14M875 438h14M890 484h14M935 631h14M965 532h14M1070 118h14M1115 162h14M1179 633h7M1232 505h14M1247 532h14M1262 580h14M1299 385h7M1307 421h13";

const BackdropChart = () => (
  <Backdrop viewBox="0 0 1320 720" fill="none" strokeWidth="3" aria-hidden="true">
    <path d="M217 80V720M397 80V720M574 80V720M754 80V720M934 80V720M1114 80V720M250 175H1320M250 271H1320M250 367H1320M250 463H1320M250 559H1320M138 658H1320" stroke="#a9b9b4" strokeDasharray="9 9" />
    <path d={lightBars} stroke="#bccdbf" />
    <path d={darkBars} stroke="#9bae9f" />
    <path d="M574 295V411M754 345V460M934 558V643" stroke="#68c4b8" strokeDasharray="12 6" />
  </Backdrop>
);

/* ---------- page ---------- */

const menus: [string, string, string][] = [["", "D", "atei"], ["", "Ü", "bersicht"], ["Ha", "n", "delstransaktionen"], ["", "K", "ontoauszüge"], ["", "A", "nalyse Seiten"], ["", "F", "enster"], ["", "H", "ilfe"]];
const tools: [string, string, number][] = [["order", "Neue Order", 76], ["globe", "ITX", 41], ["clock", "Dashboard", 76], ["folder", "Offene Positionen", 105], ["gear", "Offene Orders", 92], ["docs", "Kontoauszüge", 92], ["save", "Aktuelles Layout speichern", 161], ["close", "Alle schließen", 197]];
const signal = [3, 3, 4, 5, 6, 7, 7, 8, 9, 10, 11, 11];

const SignalMeter = () => (
  <svg width="67" height="14" viewBox="0 0 67 14" aria-hidden="true">
    <rect x=".5" y=".5" width="66" height="13" rx="2" fill="#dfe4ea" stroke="#1c3c78" />
    {signal.map((h, i) => (
      <g key={i}>
        <rect x={4 + i * 5} y="1" width="4" height="11" fill="#fff" stroke="#b8b8b8" strokeWidth=".5" />
        <rect x={4 + i * 5} y={12 - h} width="4" height={h} fill={i < 4 ? "#d03a30" : i < 8 ? "#f0b428" : "#30cc38"} />
      </g>
    ))}
    <path d="M2 12.500H65" stroke="#3860a0" />
  </svg>
);

export default function App() {
  return (
    <Desktop>
      <GlobalStyle />
      <AppWindow>
        <TitleBar $h={15}>
          <Badge />
          <Title>DealBook 360 - Kunde - demo1222444</Title>
        </TitleBar>
        <MenuBar>
          {menus.map(([a, u, b]) => (
            <MenuItem key={u + b}>{a}<u>{u}</u>{b}</MenuItem>
          ))}
        </MenuBar>
        <Dock>
          <Gutter $pad={1}>
            <CloseDock aria-label="Leiste schließen"><CloseX /></CloseDock>
            <GutterGrip />
          </Gutter>
          <ToolBar>
            {tools.map(([icon, text, w]) => (
              <ToolButton key={icon} $w={w}><MainIcon name={icon} />{text}</ToolButton>
            ))}
            <SelectBox $w={101} $h={22}>
              <select aria-label="Konto"><option>2326918 (EUR)</option></select>
              <Arrow />
            </SelectBox>
            <Currency>EUR</Currency>
          </ToolBar>
        </Dock>
        <Dock>
          <Gutter $pad={1}>
            <CloseDock aria-label="Leiste schließen"><CloseX /></CloseDock>
            <GutterGrip />
          </Gutter>
          <InfoStack>
            <TotalsRow>
              <Total $w={316}><Grip />Gesamt-Guthaben (EUR): 49.044,30</Total>
              <Total $w={262} $blue><Grip />Offener G/V (EUR): 95,50</Total>
              <Total $w={304}><Grip />Nicht realisierter G/V (EUR): -17,96</Total>
              <Total $w={236}><Grip />Cash (EUR): 48.966,75</Total>
              <Total><Grip /></Total>
            </TotalsRow>
            <SignalRow><Grip /><SignalMeter /><b>C</b></SignalRow>
            <Ticker><Grip />19.05.2010 07:50:41 Order vollständig - Order ID: 241583004 DDL(V)2 .DE30.cfd@6.103,5 Slippage: 0,00</Ticker>
          </InfoStack>
        </Dock>
        <Workspace>
          <BackdropChart />
          <ChartWindow>
            <TitleBar $h={16}>
              <Badge />
              <Title as="h2">Chart 51 - .DE30.cfd - Germany 30 cash, EUR - 1 Std. (GMT+02:00)</Title>
              <WindowButtons>
                <WindowButton aria-label="Einrollen"><svg width="11" height="11"><path d="M2 2.500h7M2 9.500h7M3 5l2.500 2L8 5" fill="none" stroke="currentColor" /></svg></WindowButton>
                <WindowButton aria-label="Minimieren"><svg width="11" height="11"><path d="M3 8h5" stroke="currentColor" strokeWidth="2" /></svg></WindowButton>
                <WindowButton aria-label="Maximieren"><svg width="11" height="11"><path d="M2.500 2.500h6v6h-6zM2 3.500h7" fill="none" stroke="currentColor" /></svg></WindowButton>
                <WindowButton $red aria-label="Schließen"><svg width="11" height="11"><path d="M3 2.500l5 6M8 2.500l-5 6" stroke="currentColor" strokeWidth="2" /></svg></WindowButton>
              </WindowButtons>
            </TitleBar>
            <ChartTools>
              <SelectBox $w={180} $h={22}>
                <select aria-label="Charttyp"><option>Kerzenchart</option></select>
                <Arrow />
              </SelectBox>
              <SelectBox $w={77} $h={22}>
                <select aria-label="Intervall"><option>1 Std.</option></select>
                <Arrow />
              </SelectBox>
              {chartIcons.map((icon, i) => (
                <IconButton key={i} aria-label={`Werkzeug ${i + 1}`}><Glyph>{icon}</Glyph></IconButton>
              ))}
            </ChartTools>
            <ChartBody>
              <Palette>
                <PaletteGrid>
                  {paletteIcons.map((icon, i) => (
                    <IconButton key={i} $active={i === 0} aria-label={`Zeichnen ${i + 1}`}><Glyph>{icon}</Glyph></IconButton>
                  ))}
                </PaletteGrid>
                <Swatches>
                  {["#f80000", "#008000", "#0000f0", "#f8f800", "#ffffff", "#000000", "#800000", "#808080"].map((c) => (
                    <Swatch key={c} $c={c} aria-label={c} />
                  ))}
                </Swatches>
              </Palette>
              <PlotColumn>
                <Plot viewBox="97 222 1482 796" fontFamily={chartFont} fontSize="11" role="img" aria-label="Germany 30 cash">
                  <defs>
                    <filter id="drop" x="-10%" y="-10%" width="120%" height="130%">
                      <feDropShadow dx="2" dy="2" stdDeviation="1.500" floodColor="#000" floodOpacity=".5" />
                    </filter>
                  </defs>
                  <PriceChart />
                  <Annotations />
                  <g fontFamily="Liberation Sans, Arial, sans-serif" fontSize="13" fontWeight="700" textAnchor="middle">
                    <text x="1126" y="333">Fehlsignal!</text>
                    <text x="1402" y="409">Einstieg short</text>
                  </g>
                  <TimeAxis y={765} />
                  <Oscillator />
                  <TimeAxis y={996} />
                </Plot>
                <StatusBar>
                  <StatusText>{"Slow %K=60,2684 Slow %D=62,8423 HI Base=80,0000 LO Base=20,0000  18.05.10 18:00:00 49,3440"}</StatusText>
                  <Scroller>
                    <ScrollButton aria-label="Zurück"><svg width="8" height="8"><path d="M6 1L2.500 4L6 7" fill="none" stroke="#000" strokeWidth="2" /></svg></ScrollButton>
                    <ScrollButton $gap={15} aria-label="Position"><svg width="10" height="8"><path d="M1.500 0v8M3.500 0v8M5.500 0v8M7.500 0v8" stroke="#2f5f45" /></svg></ScrollButton>
                    <ScrollButton $gap={2} aria-label="Vor"><svg width="8" height="8"><path d="M2 1l3.500 3L2 7" fill="none" stroke="#000" strokeWidth="2" /></svg></ScrollButton>
                    <ScrollButton $flat aria-label="Verschieben"><svg width="11" height="11"><path d="M5.500 0v11M0 5.500h11M4.500 1.500h2M4.500 9.500h2M1.500 4.500v2M9.500 4.500v2" stroke="#000" /></svg></ScrollButton>
                    <ScrollButton $flat aria-label="Vergrößern"><svg width="9" height="9"><path d="M4.500 1v7M1 4.500h7" stroke="#000" /></svg></ScrollButton>
                    <ScrollButton $flat aria-label="Verkleinern"><svg width="9" height="9"><path d="M1 4.500h7" stroke="#000" /></svg></ScrollButton>
                    <ScrollButton $flat aria-label="Zurücksetzen"><svg width="13" height="10"><path d="M4 4c4-4 8-2 8 1s-2 3-2 4" fill="none" stroke="#000" strokeWidth="1.300" /><path d="M1 1v6h6z" fill="#000" /></svg></ScrollButton>
                  </Scroller>
                </StatusBar>
              </PlotColumn>
            </ChartBody>
          </ChartWindow>
        </Workspace>
      </AppWindow>
    </Desktop>
  );
}
